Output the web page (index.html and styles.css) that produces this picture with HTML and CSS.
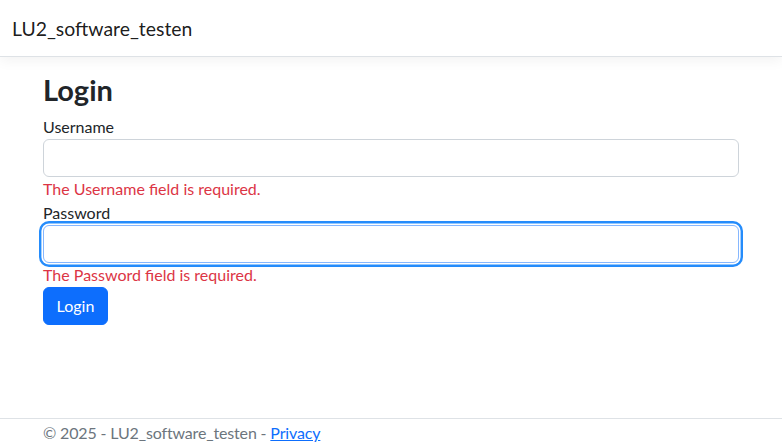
FILE: index.html
```html
<!DOCTYPE html>
<html lang="nl">
<head>
<meta charset="utf-8">
<title>Login - LU2_software_testen</title>
<link rel="stylesheet" href="styles.css">
</head>
<body>
<div class="page">
  <header class="navbar">
    <a class="brand" href="#">LU2_software_testen</a>
  </header>
  <main class="container">
    <h1 class="title">Login</h1>
    <form class="form">
      <div class="group">
        <label class="label" for="u">Username</label>
        <input class="control" id="u" type="text">
        <span class="error">The Username field is required.</span>
      </div>
      <div class="group">
        <label class="label" for="p">Password</label>
        <input class="control focused" id="p" type="password">
        <span class="error">The Password field is required.</span>
      </div>
      <button class="btn" type="button">Login</button>
    </form>
  </main>
  <footer class="footer">
    <div class="container">© 2025 - LU2_software_testen - <a class="link" href="#">Privacy</a></div>
  </footer>
</div>
</body>
</html>
```

FILE: styles.css
```css
* { box-sizing: border-box; }
html, body { margin: 0; padding: 0; }
body {
  font-family: Lato, "Noto Sans", sans-serif;
  font-size: 16px;
  line-height: 1.5;
  color: #212529;
  background: #fff;
}
.page {
  display: flex;
  flex-direction: column;
  height: 100vh;
  overflow: hidden;
}
.navbar {
  flex: 0 0 auto;
  height: 57px;
  padding: 8px 12px;
  display: flex;
  align-items: center;
  border-bottom: 1px solid #dee2e6;
  box-shadow: 0 4px 12px rgba(0,0,0,.05);
  position: relative;
  z-index: 1;
}
.brand {
  font-size: 19.4px;
  line-height: 30px;
  color: rgba(0,0,0,.9);
  text-decoration: none;
  padding: 5px 0 4px;
}
.container {
  width: 720px;
  margin: 0 auto;
  padding: 0 12px;
}
main.container {
  flex: 1 1 auto;
  min-height: 0;
  padding-top: 16px;
}
.title {
  margin: 0 0 8px;
  font-size: 29px;
  font-weight: 700;
  line-height: 34px;
  height: 34px;
}
.form { display: flex; flex-direction: column; align-items: flex-start; }
.group { display: flex; flex-direction: column; width: 100%; }
.label { display: block; line-height: 24px; }
.control {
  display: block;
  width: 100%;
  height: 38px;
  padding: 6px 12px;
  font: inherit;
  color: #212529;
  border: 1px solid #ced4da;
  border-radius: 6px;
  background: #fff;
  outline: none;
}
.control.focused {
  border-color: #86b7fe;
  box-shadow: 0 0 0 1.6px #fff, 0 0 0 4px #258cfb;
}
.error {
  color: #dc3545;
  line-height: 24px;
}
.btn {
  font: inherit;
  line-height: 24px;
  color: #fff;
  background: #0d6efd;
  border: 1px solid #0d6efd;
  border-radius: 6px;
  padding: 6px 12px;
  width: 65px;
}
.footer {
  flex: 0 0 25px;
  height: 25px;
  min-height: 0;
  border-top: 1px solid #dee2e6;
  color: #6c757d;
  line-height: 28px;
  white-space: nowrap;
  letter-spacing: -0.15px;
}
.link { color: #0d6efd; text-decoration: underline; }
```
